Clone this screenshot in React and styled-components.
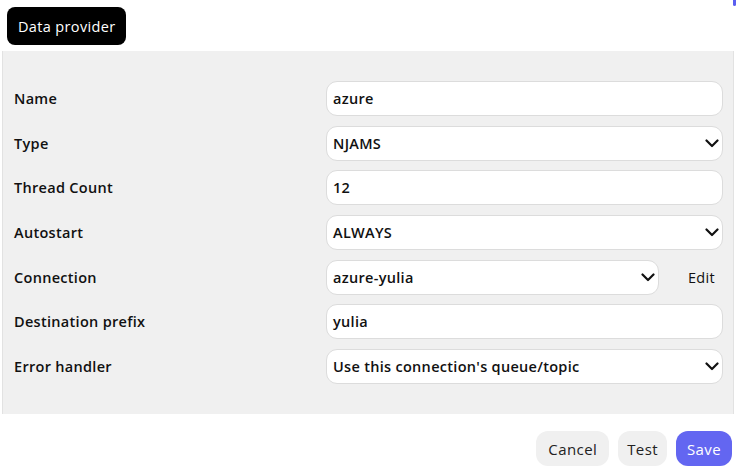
import styled, { createGlobalStyle } from "styled-components";

const Global = createGlobalStyle`
    body {
        margin: 0;
        background: white;
        font-family: "Open Sans", "Liberation Sans", sans-serif;
        color: #111;
    }
`;

const Page = styled.div`
    position: relative;
    width: 737px;
    height: 468px;
    padding-top: 7px;
    box-sizing: border-box;
`;

const Corner = styled.div`
    position: absolute;
    top: 0;
    right: 1px;
    width: 3px;
    height: 6px;
    border-radius: 0 0 2px 2px;
    background: #5a5ef0;
`;

const Title = styled.div`
    display: inline-flex;
    align-items: center;
    margin-left: 7px;
    height: 38px;
    padding: 0 11px;
    background: black;
    color: white;
    border-radius: 8px;
    font-size: 14.5px;
    font-weight: 500;
    letter-spacing: 0.35px;
`;

const Panel = styled.div`
    margin: 6px 3px 0 2px;
    height: 363px;
    box-sizing: border-box;
    padding: 30px 10px 0 11px;
    background: #f0f0f0;
    border-left: 1px solid #e2e2e2;
    border-right: 1px solid #e2e2e2;
    display: flex;
    flex-direction: column;
    gap: 9.7px;
`;

const Row = styled.div`
    display: grid;
    grid-template-columns: 312px 1fr;
    align-items: center;
`;

const Label = styled.div`
    font-size: 14.5px;
    font-weight: 600;
    letter-spacing: 0.3px;
`;

const Field = styled.div`
    display: flex;
    align-items: center;
    justify-content: space-between;
    height: 35px;
    box-sizing: border-box;
    padding: 0 3px 0 6px;
    background: white;
    border: 1px solid #dcdcdc;
    border-radius: 11px;
    font-size: 14.5px;
    font-weight: 600;
    letter-spacing: 0.3px;
    width: ${(p) => (p.$narrow ? "333px" : "100%")};
`;

const Chevron = styled.svg`
    width: 14px;
    height: 9px;
    flex: none;
`;

const Inline = styled.div`
    display: flex;
    align-items: center;
`;

const EditLink = styled.div`
    margin-left: 29px;
    font-size: 14.5px;
    font-weight: 500;
    letter-spacing: 0.3px;
`;

const Footer = styled.div`
    display: flex;
    justify-content: flex-end;
    gap: 9px;
    padding: 17px 5px 0 0;
`;

const Button = styled.div`
    display: flex;
    align-items: center;
    height: 35px;
    padding: 0 ${(p) => p.$pad}px;
    border-radius: 12px;
    font-size: 15px;
    font-weight: 500;
    letter-spacing: 0.4px;
    background: ${(p) => (p.$primary ? "#6366f1" : "#f0f0f0")};
    color: ${(p) => (p.$primary ? "white" : "#222")};
`;

const rows = [
    { label: "Name", value: "azure" },
    { label: "Type", value: "NJAMS", select: true },
    { label: "Thread Count", value: "12" },
    { label: "Autostart", value: "ALWAYS", select: true },
    { label: "Connection", value: "azure-yulia", select: true, edit: true },
    { label: "Destination prefix", value: "yulia" },
    { label: "Error handler", value: "Use this connection's queue/topic", select: true },
];

function FieldBox({ row }) {
    return (
        <Field $narrow={row.edit}>
            <span>{row.value}</span>
            {row.select && (
                <Chevron viewBox="0 0 14 9">
                    <polyline points="1.5,1.5 7,7 12.5,1.5" fill="none" stroke="#111" strokeWidth="2.2" strokeLinecap="round" strokeLinejoin="round" />
                </Chevron>
            )}
        </Field>
    );
}

export default function App() {
    return (
        <Page>
            <Global />
            <Corner />
            <Title>Data provider</Title>
            <Panel>
                {rows.map((row) => (
                    <Row key={row.label}>
                        <Label>{row.label}</Label>
                        {row.edit ? (
                            <Inline>
                                <FieldBox row={row} />
                                <EditLink>Edit</EditLink>
                            </Inline>
                        ) : (
                            <FieldBox row={row} />
                        )}
                    </Row>
                ))}
            </Panel>
            <Footer>
                <Button $pad={12}>Cancel</Button>
                <Button $pad={9}>Test</Button>
                <Button $pad={11} $primary>Save</Button>
            </Footer>
        </Page>
    );
}
